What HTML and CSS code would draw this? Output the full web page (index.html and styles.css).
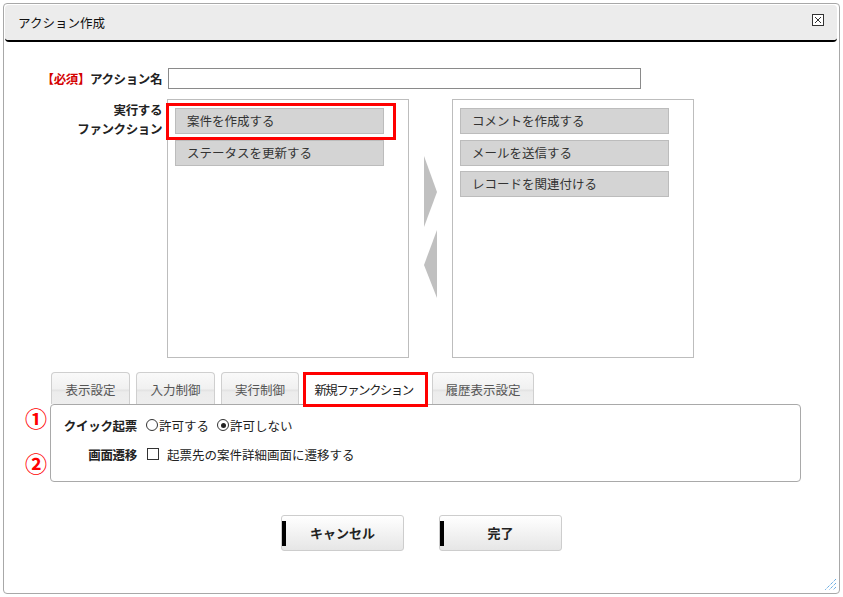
FILE: index.html
```html
<!DOCTYPE html>
<html lang="ja">
<head>
<meta charset="utf-8">
<title>アクション作成</title>
<link rel="stylesheet" href="styles.css">
</head>
<body>
<div class="dialog">
  <div class="header">
    <span class="title">アクション作成</span>
    <svg class="close" width="12" height="12" viewBox="0 0 12 12"><rect x="0.5" y="0.5" width="11" height="11" fill="#fff" stroke="#333"/><path d="M3 3 L9 9 M9 3 L3 9" stroke="#333" stroke-width="1"/></svg>
  </div>

  <div class="form">
    <div class="label row1"><span class="req">【必須】</span>アクション名</div>
    <div class="field row1"><div class="textbox"></div></div>

    <div class="label row2">実行する<br>ファンクション</div>
    <div class="field lists">
      <div class="list">
        <div class="item">案件を作成する</div>
        <div class="item">ステータスを更新する</div>
        <div class="mark mark-item"></div>
      </div>
      <div class="arrows">
        <svg width="44" height="259" viewBox="0 0 44 259"><polygon points="15,57 28,93 15,128" fill="#c0c0c0"/><polygon points="28,131 15,166 28,199" fill="#c0c0c0"/></svg>
      </div>
      <div class="list">
        <div class="item">コメントを作成する</div>
        <div class="item">メールを送信する</div>
        <div class="item">レコードを関連付ける</div>
      </div>
    </div>
  </div>

  <div class="tabs">
    <div class="tab t1">表示設定</div>
    <div class="tab t2">入力制御</div>
    <div class="tab t3">実行制御</div>
    <div class="tab t4 active">新規ファンクション<div class="mark mark-tab"></div></div>
    <div class="tab t5">履歴表示設定</div>
  </div>
  <div class="panel">
    <span class="num num1">①</span>
    <span class="num num2">②</span>
    <div class="prow">
      <div class="plabel">クイック起票</div>
      <div class="pfield">
        <span class="opt"><span class="radio"></span>許可する</span>
        <span class="opt"><span class="radio on"></span>許可しない</span>
      </div>
    </div>
    <div class="prow">
      <div class="plabel">画面遷移</div>
      <div class="pfield">
        <span class="opt"><span class="check"></span>起票先の案件詳細画面に遷移する</span>
      </div>
    </div>
  </div>

  <div class="buttons">
    <div class="btn">キャンセル</div>
    <div class="btn">完了</div>
  </div>

  <svg class="grip" width="14" height="14" viewBox="0 0 14 14">
    <path d="M13 2 L2 13 M13 6 L6 13 M13 10 L10 13" stroke="#2a8ad6" stroke-width="1" stroke-dasharray="1 1"/>
  </svg>
</div>
</body>
</html>
```

FILE: styles.css
```css
* { box-sizing: border-box; }
body {
  margin: 0;
  background: #fff;
  font-family: "Noto Sans CJK JP", "Noto Sans", sans-serif;
  font-size: 12.5px;
  color: #222;
}
.dialog {
  position: relative;
  margin: 3px;
  width: 837px;
  height: 591px;
  border: 1px solid #a8a8a8;
  border-radius: 4px;
  background: #fff;
}
.header {
  margin: 1px 2px 0 1px;
  height: 37px;
  background: #ececec;
  border-bottom: 2px solid #000;
  border-radius: 4px;
  display: flex;
  align-items: center;
  justify-content: space-between;
  padding: 0 13px 0 13px;
}
.title { font-size: 12.5px; color: #111; line-height: 35px; }
.close { margin-top: -6px; }

.form {
  display: grid;
  grid-template-columns: 158px auto;
  column-gap: 5px;
  row-gap: 10px;
  margin-top: 26px;
}
.label {
  text-align: right;
  font-weight: bold;
  color: #222;
  letter-spacing: -0.4px;
}
.label.row1 { line-height: 21px; }
.label.row2 { line-height: 19px; padding-top: 1px; }
.req { color: #d40000; }
.textbox {
  margin-left: 1px;
  width: 473px;
  height: 21px;
  border: 1px solid #8a8a8a;
  background: #fff;
}
.lists { display: flex; }
.list {
  position: relative;
  width: 242px;
  height: 259px;
  border: 1px solid #bdbdbd;
  padding: 8px 0 0 7px;
  display: flex;
  flex-direction: column;
  gap: 5.5px;
}
.item {
  width: 209px;
  height: 26px;
  background: #d4d4d4;
  border: 1px solid #bcbcbc;
  padding-left: 11px;
  line-height: 24px;
  color: #333;
}
.arrows { width: 43px; }
.arrows svg { display: block; }
.mark {
  position: absolute;
  border: 3px solid #f00;
  pointer-events: none;
}
.mark-item { left: -2px; top: 3px; width: 230px; height: 37px; }

.tabs {
  display: flex;
  margin: 14px 0 0 47px;
  height: 32px;
  align-items: flex-end;
}
.tab {
  position: relative;
  height: 32px;
  margin-right: 6px;
  border: 1px solid #cfcfcf;
  border-bottom: none;
  border-radius: 4px 4px 0 0;
  background: linear-gradient(#f9f9f9 0%, #f1f1f1 50%, #e3e3e3 56%, #ececec 62%, #eeeeee 100%);
  color: #555;
  line-height: 33px;
  text-align: center;
  white-space: nowrap;
}
.t1 { width: 79px; }
.t2 { width: 79px; }
.t3 { width: 78px; }
.t4 { width: 121px; }
.t5 { width: 102px; }
.tab.active {
  background: #fff;
  color: #222;
  height: 33px;
  margin-bottom: -1px;
  z-index: 2;
  border-color: #aaa;
  letter-spacing: -1.6px;
  padding-right: 4px;
}
.mark-tab { left: -3px; top: -1px; width: 125px; height: 35px; }

.panel {
  position: relative;
  margin-left: 46px;
  width: 751px;
  height: 78px;
  border: 1px solid #a9a9a9;
  border-radius: 4px;
  padding-top: 10px;
}
.prow {
  display: flex;
  align-items: center;
  height: 20px;
  margin-bottom: 9px;
}
.plabel {
  width: 86px;
  text-align: right;
  font-weight: bold;
  color: #222;
  letter-spacing: -0.3px;
}
.pfield {
  display: flex;
  align-items: center;
  margin-left: 9px;
}
.opt { display: inline-flex; align-items: center; margin-right: 8px; color: #222; }
.radio {
  width: 12px;
  height: 12px;
  border: 1px solid #333;
  border-radius: 50%;
  margin-right: 1px;
  position: relative;
  background: #fff;
}
.radio.on::after {
  content: "";
  position: absolute;
  left: 2.5px;
  top: 2.5px;
  width: 5px;
  height: 5px;
  border-radius: 50%;
  background: #222;
}
.check {
  width: 12px;
  height: 12px;
  border: 1px solid #333;
  margin: 0 8px 0 1px;
  background: #fff;
}
.num {
  position: absolute;
  left: -26px;
  color: #f00;
  font-size: 22px;
  font-weight: bold;
  line-height: 22px;
}
.num1 { top: 1px; }
.num2 { top: 46px; }

.buttons {
  display: flex;
  justify-content: center;
  gap: 35px;
  margin-top: 33px;
}
.btn {
  position: relative;
  width: 123px;
  height: 36px;
  border: 1px solid #cdcdcd;
  border-radius: 3px;
  background: linear-gradient(#ffffff, #e6e6e6);
  text-align: center;
  line-height: 34px;
  font-weight: bold;
  font-size: 13px;
  color: #222;
}
.btn::before {
  content: "";
  position: absolute;
  left: 0;
  top: 5px;
  width: 4px;
  height: 25px;
  background: #000;
}
.grip {
  position: absolute;
  right: 2px;
  bottom: 2px;
}
```
